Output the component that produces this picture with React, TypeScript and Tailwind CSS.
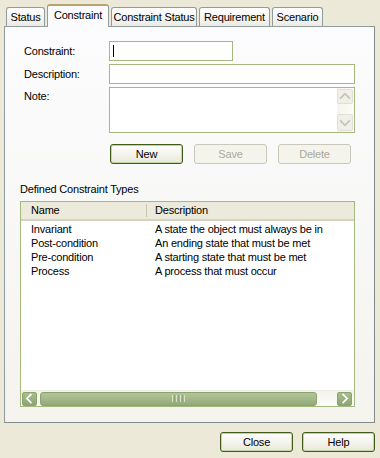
import React from "react";

const font = { fontFamily: '"Liberation Sans", Arial, sans-serif' };

function Tab({ label, w, selected }: { label: string; w: number; selected?: boolean }) {
  if (selected) {
    return (
      <div
        className="relative z-10 h-[23px] flex items-start justify-center pt-[3px] bg-[#FCFCFE] border-x border-[#919B9C] border-t-2 border-t-[#B9A36A] rounded-t-[3px]"
        style={{ width: w }}
      >
        <span>{label}</span>
      </div>
    );
  }
  return (
    <div
      className="mb-px h-[19px] flex items-center justify-center bg-gradient-to-b from-[#FFFFFF] to-[#ECEBE5] border-x border-t border-[#919B9C] rounded-t-[3px]"
      style={{ width: w }}
    >
      <span>{label}</span>
    </div>
  );
}

function Btn({ label, def, disabled }: { label: string; def?: boolean; disabled?: boolean }) {
  if (disabled) {
    return (
      <div className="w-[73px] h-[20px] flex items-center justify-center rounded-[3px] border border-[#CAC8BB] bg-[#F5F4EC] text-[#ACA899]">
        {label}
      </div>
    );
  }
  return (
    <div
      className={
        "w-[73px] h-[20px] flex items-center justify-center rounded-[3px] border bg-gradient-to-b from-[#FFFFFF] to-[#EAE8DA] " +
        (def ? "border-[#3E5B17] shadow-[inset_0_0_0_1px_#C3D5A5]" : "border-[#3E5B17]")
      }
    >
      {label}
    </div>
  );
}

function Chevron({ dir, color }: { dir: "up" | "down" | "left" | "right"; color: string }) {
  const paths: Record<string, string> = {
    up: "M3 9 L7.5 4.5 L12 9",
    down: "M3 6 L7.5 10.5 L12 6",
    left: "M9 3 L4.5 7.5 L9 12",
    right: "M6 3 L10.5 7.5 L6 12",
  };
  return (
    <svg width="15" height="15" viewBox="0 0 15 15">
      <path d={paths[dir]} fill="none" stroke={color} strokeWidth="2" strokeLinecap="square" />
    </svg>
  );
}

const rows = [
  ["Invariant", "A state the object must always be in"],
  ["Post-condition", "An ending state that must be met"],
  ["Pre-condition", "A starting state that must be met"],
  ["Process", "A process that must occur"],
];

export default function App() {
  return (
    <div
      className="w-[380px] h-[458px] bg-[#ECE9D8] flex flex-col text-[11px] tracking-[-0.2px] text-black leading-[13px]"
      style={font}
    >
      {/* Tabs */}
      <div className="flex items-end h-[27px] pl-[6px] gap-[2px]">
        <Tab label="Status" w={39} />
        <Tab label="Constraint" w={62} selected />
        <Tab label="Constraint Status" w={86} />
        <Tab label="Requirement" w={71} />
        <Tab label="Scenario" w={51} />
      </div>

      {/* Panel */}
      <div className="ml-[4px] w-[371px] h-[397px] -mt-px border border-[#919B9C] border-b-[#7F8A8B] border-r-[#7F8A8B] bg-gradient-to-b from-[#FCFCFE] to-[#F4F3EE] flex flex-col">
        <div className="pt-[14px] flex flex-col">
          <div className="flex">
            <div className="w-[104px] pl-[19px] flex items-center">Constraint:</div>
            <div className="w-[124px] h-[20px] border border-[#A4B97F] bg-white flex items-center pl-[3px]">
              <span className="w-px h-[12px] bg-black" />
            </div>
          </div>
          <div className="flex mt-[3px]">
            <div className="w-[104px] pl-[19px] flex items-center">Description:</div>
            <div className="w-[246px] h-[20px] border border-[#A4B97F] bg-white" />
          </div>
          <div className="flex mt-[3px]">
            <div className="w-[104px] pl-[19px] pt-[3px]">Note:</div>
            <div className="w-[246px] h-[46px] border border-[#A4B97F] bg-white flex justify-end">
              <div className="w-[17px] h-full flex flex-col justify-between py-[1px] pr-[1px] bg-gradient-to-r from-[#F6F5EF] to-[#FBFBF8]">
                <div className="w-[16px] h-[15px] rounded-[2px] border border-[#E2E0D5] bg-[#F1F0E8] flex items-center justify-center">
                  <Chevron dir="up" color="#C6C4B6" />
                </div>
                <div className="w-[16px] h-[17px] rounded-[2px] border border-[#E2E0D5] bg-[#F1F0E8] flex items-center justify-center">
                  <Chevron dir="down" color="#C6C4B6" />
                </div>
              </div>
            </div>
          </div>

          <div className="flex gap-[11px] pl-[105px] mt-[11px]">
            <Btn label="New" def />
            <Btn label="Save" disabled />
            <Btn label="Delete" disabled />
          </div>

          <div className="pl-[15px] mt-[19px]">Defined Constraint Types</div>

          {/* List */}
          <div className="ml-[15px] mt-[5px] w-[335px] h-[206px] border border-[#A4B97F] bg-white flex flex-col">
            <div className="h-[19px] bg-[#EBEADB] border-b-2 border-[#D6D2C2] flex items-center shrink-0">
              <div className="w-[125px] pl-[10px]">Name</div>
              <div className="w-px h-[13px] bg-[#C7C5B2]" />
              <div className="pl-[8px]">Description</div>
            </div>
            <div className="flex-1 pt-[1px]">
              {rows.map(([n, d]) => (
                <div key={n} className="h-[14px] flex items-center">
                  <div className="w-[125px] pl-[10px]">{n}</div>
                  <div className="pl-[9px]">{d}</div>
                </div>
              ))}
            </div>
            {/* Horizontal scrollbar */}
            <div className="h-[16px] shrink-0 flex items-center pl-[1px] pr-[1px] bg-gradient-to-b from-[#F3F2EC] to-[#FEFEFB] border-t border-[#EEEDE6]">
              <div className="w-[15px] h-[14px] rounded-[2px] border border-[#8DA36E] bg-gradient-to-b from-[#A9BD8E] to-[#8EA573] flex items-center justify-center">
                <Chevron dir="left" color="#FFFFFF" />
              </div>
              <div className="ml-[3px] w-[277px] h-[14px] rounded-[3px] border border-[#8DA36E] bg-gradient-to-b from-[#B2C59A] via-[#A4B88A] to-[#93A979] flex items-center justify-center gap-[1px]">
                <span className="w-px h-[7px] bg-[#D8E2C8]" />
                <span className="w-px h-[7px] bg-[#8EA373]" />
                <span className="w-px h-[7px] bg-[#D8E2C8]" />
                <span className="w-px h-[7px] bg-[#8EA373]" />
                <span className="w-px h-[7px] bg-[#D8E2C8]" />
                <span className="w-px h-[7px] bg-[#8EA373]" />
                <span className="w-px h-[7px] bg-[#D8E2C8]" />
              </div>
              <div className="flex-1" />
              <div className="w-[15px] h-[14px] mr-[1px] rounded-[2px] border border-[#8DA36E] bg-gradient-to-b from-[#A9BD8E] to-[#8EA573] flex items-center justify-center">
                <Chevron dir="right" color="#FFFFFF" />
              </div>
            </div>
          </div>
        </div>
      </div>

      {/* Bottom buttons */}
      <div className="flex justify-end gap-[9px] pr-[5px] mt-[9px]">
        <Btn label="Close" def />
        <Btn label="Help" def />
      </div>
    </div>
  );
}
